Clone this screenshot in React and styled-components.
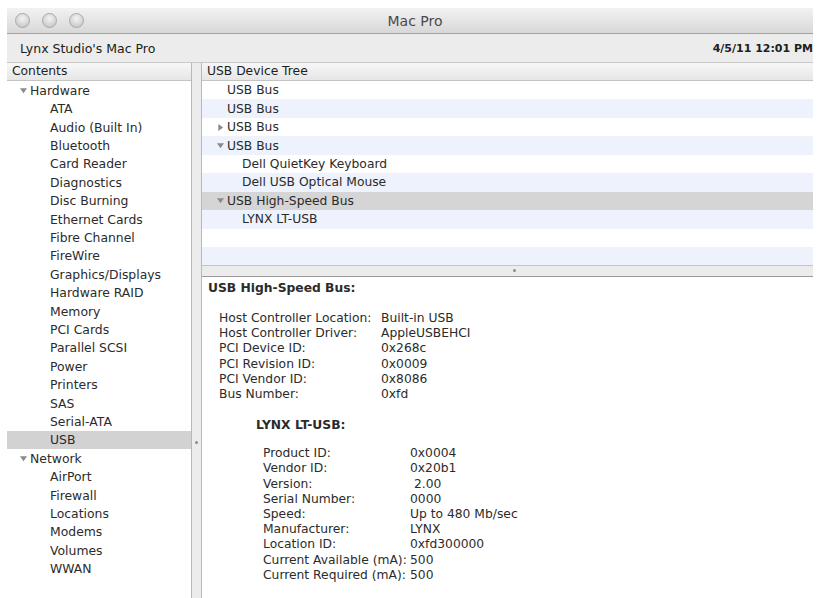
import React from 'react';
import styled, { createGlobalStyle } from 'styled-components';

const GlobalStyle = createGlobalStyle`
  html, body {
    margin: 0;
    padding: 0;
    background: #ffffff;
  }
  body {
    font-family: "DejaVu Sans", "Liberation Sans", sans-serif;
    color: #2a2a2a;
  }
`;

const sidebar = [
  { label: 'Hardware', level: 0, open: true },
  { label: 'ATA', level: 1 },
  { label: 'Audio (Built In)', level: 1 },
  { label: 'Bluetooth', level: 1 },
  { label: 'Card Reader', level: 1 },
  { label: 'Diagnostics', level: 1 },
  { label: 'Disc Burning', level: 1 },
  { label: 'Ethernet Cards', level: 1 },
  { label: 'Fibre Channel', level: 1 },
  { label: 'FireWire', level: 1 },
  { label: 'Graphics/Displays', level: 1 },
  { label: 'Hardware RAID', level: 1 },
  { label: 'Memory', level: 1 },
  { label: 'PCI Cards', level: 1 },
  { label: 'Parallel SCSI', level: 1 },
  { label: 'Power', level: 1 },
  { label: 'Printers', level: 1 },
  { label: 'SAS', level: 1 },
  { label: 'Serial-ATA', level: 1 },
  { label: 'USB', level: 1, selected: true },
  { label: 'Network', level: 0, open: true },
  { label: 'AirPort', level: 1 },
  { label: 'Firewall', level: 1 },
  { label: 'Locations', level: 1 },
  { label: 'Modems', level: 1 },
  { label: 'Volumes', level: 1 },
  { label: 'WWAN', level: 1 },
];

const tree = [
  { label: 'USB Bus', level: 0 },
  { label: 'USB Bus', level: 0 },
  { label: 'USB Bus', level: 0, toggle: 'closed' },
  { label: 'USB Bus', level: 0, toggle: 'open' },
  { label: 'Dell QuietKey Keyboard', level: 1 },
  { label: 'Dell USB Optical Mouse', level: 1 },
  { label: 'USB High-Speed Bus', level: 0, toggle: 'open', selected: true },
  { label: 'LYNX LT-USB', level: 1 },
  { label: '', level: 0 },
  { label: '', level: 0 },
];

const busInfo = [
  ['Host Controller Location:', 'Built-in USB'],
  ['Host Controller Driver:', 'AppleUSBEHCI'],
  ['PCI Device ID:', '0x268c'],
  ['PCI Revision ID:', '0x0009'],
  ['PCI Vendor ID:', '0x8086'],
  ['Bus Number:', '0xfd'],
];

const deviceInfo = [
  ['Product ID:', '0x0004'],
  ['Vendor ID:', '0x20b1'],
  ['Version:', ' 2.00'],
  ['Serial Number:', '0000'],
  ['Speed:', 'Up to 480 Mb/sec'],
  ['Manufacturer:', 'LYNX'],
  ['Location ID:', '0xfd300000'],
  ['Current Available (mA):', '500'],
  ['Current Required (mA):', '500'],
];

const Disclosure = ({ open }) => (
  <Arrow viewBox="0 0 8 8">
    {open ? <path d="M0 1.5 L8 1.5 L4 7 Z" /> : <path d="M1.5 0 L7 4 L1.5 8 Z" />}
  </Arrow>
);

const App = () => {
  return (
    <>
      <GlobalStyle />
      <Window>
        <TitleBar>
          <Lights>
            <Light />
            <Light />
            <Light />
          </Lights>
          <Title>Mac Pro</Title>
        </TitleBar>
        <InfoBar>
          <span>Lynx Studio's Mac Pro</span>
          <span>4/5/11 12:01 PM</span>
        </InfoBar>
        <Body>
          <Sidebar>
            <ColumnHeader>Contents</ColumnHeader>
            {sidebar.map((item, i) => (
              <SideRow key={i} $level={item.level} $selected={item.selected}>
                {item.open && <Disclosure open />}
                {item.label}
              </SideRow>
            ))}
          </Sidebar>
          <VSplitter>
            <Dimple />
          </VSplitter>
          <Main>
            <TreePane>
              <ColumnHeader>USB Device Tree</ColumnHeader>
              {tree.map((row, i) => (
                <TreeRow key={i} $odd={i % 2 === 1} $level={row.level} $selected={row.selected}>
                  {row.toggle && <Disclosure open={row.toggle === 'open'} />}
                  {row.label}
                </TreeRow>
              ))}
            </TreePane>
            <HSplitter>
              <Dimple />
            </HSplitter>
            <Detail>
              <SectionTitle>USB High-Speed Bus:</SectionTitle>
              <InfoTable $indent={11} $keyWidth={162}>
                {busInfo.map(([k, v]) => (
                  <React.Fragment key={k}>
                    <span>{k}</span>
                    <span>{v}</span>
                  </React.Fragment>
                ))}
              </InfoTable>
              <DeviceTitle>LYNX LT-USB:</DeviceTitle>
              <InfoTable $indent={55} $keyWidth={147}>
                {deviceInfo.map(([k, v]) => (
                  <React.Fragment key={k}>
                    <span>{k}</span>
                    <span>{v}</span>
                  </React.Fragment>
                ))}
              </InfoTable>
            </Detail>
          </Main>
        </Body>
      </Window>
    </>
  );
};

const Window = styled.div`
  margin: 8px 5px 0 7px;
  height: 590px;
  background: #e9e9e9;
  display: flex;
  flex-direction: column;
  overflow: hidden;
`;

const TitleBar = styled.div`
  height: 25px;
  position: relative;
  display: flex;
  align-items: center;
  justify-content: center;
  padding-left: 10px;
  background: linear-gradient(#f2f2f2, #d8d8d8);
  border-bottom: 1px solid #a2a2a2;
`;

const Lights = styled.div`
  position: absolute;
  left: 8px;
  top: 5px;
  display: flex;
  gap: 12px;
`;

const Light = styled.div`
  width: 13px;
  height: 13px;
  border-radius: 50%;
  background: radial-gradient(circle at 50% 35%, #f4f4f4, #cfcfcf 70%, #bdbdbd);
  border: 1px solid #a9a9a9;
`;

const Title = styled.div`
  font-size: 14px;
  color: #4a4a4a;
`;

const InfoBar = styled.div`
  height: 28px;
  display: flex;
  align-items: center;
  justify-content: space-between;
  padding: 0 0 0 13px;
  font-size: 12.5px;
  color: #202020;
  background: #ececec;
  border-bottom: 1px solid #c8c8c8;
  & > span:last-child {
    font-weight: bold;
    font-size: 11px;
  }
`;

const Body = styled.div`
  flex: 1;
  display: flex;
  min-height: 0;
`;

const Sidebar = styled.div`
  width: 184px;
  background: #ffffff;
  border-right: 1px solid #b8b8b8;
  font-size: 12.4px;
`;

const ColumnHeader = styled.div`
  height: 17px;
  line-height: 17px;
  padding-left: 5px;
  font-size: 12.3px;
  color: #1e1e1e;
  background: linear-gradient(#f7f7f7, #e6e6e6);
  border-bottom: 1px solid #c4c4c4;
`;

const SideRow = styled.div`
  height: 18.42px;
  display: flex;
  align-items: center;
  padding-left: ${(p) => (p.$level === 0 ? 13 : 43)}px;
  color: #2b2b2b;
  background: ${(p) => (p.$selected ? '#d2d2d2' : 'transparent')};
  white-space: nowrap;
  & > svg {
    margin-right: 3px;
  }
`;

const Arrow = styled.svg`
  width: 7px;
  height: 7px;
  fill: #8a8a8a;
  flex-shrink: 0;
`;

const VSplitter = styled.div`
  width: 9px;
  background: #ececec;
  border-right: 1px solid #b8b8b8;
  position: relative;
  & > div {
    top: 378px;
    left: 3px;
  }
`;

const HSplitter = styled.div`
  height: 10px;
  background: #ececec;
  border-top: 1px solid #c4c4c4;
  border-bottom: 1px solid #9a9a9a;
  position: relative;
  & > div {
    top: 3px;
    left: 311px;
  }
`;

const Dimple = styled.div`
  position: absolute;
  width: 3px;
  height: 3px;
  border-radius: 50%;
  background: #8c8c8c;
`;

const Main = styled.div`
  flex: 1;
  display: flex;
  flex-direction: column;
  background: #ffffff;
  min-width: 0;
`;

const TreePane = styled.div`
  height: 202px;
  font-size: 12.3px;
  overflow: hidden;
`;

const TreeRow = styled.div`
  height: 18.45px;
  display: flex;
  align-items: center;
  padding-left: ${(p) => (p.$level === 0 ? 25 : 40)}px;
  color: #2b2b2b;
  white-space: nowrap;
  background: ${(p) => (p.$selected ? '#d5d5d5' : p.$odd ? '#edf2fc' : '#ffffff')};
  & > svg {
    margin-left: -10px;
    margin-right: 3px;
  }
`;

const Detail = styled.div`
  flex: 1;
  padding: 3px 0 0 6px;
  font-size: 12.3px;
  color: #2b2b2b;
`;

const SectionTitle = styled.div`
  font-weight: bold;
  height: 16px;
  line-height: 16px;
  margin-bottom: 15px;
`;

const DeviceTitle = styled.div`
  font-weight: bold;
  line-height: 16px;
  margin: 15px 0 13px 48px;
`;

const InfoTable = styled.div`
  display: grid;
  grid-template-columns: ${(p) => p.$keyWidth}px auto;
  line-height: 15.2px;
  padding-left: ${(p) => p.$indent}px;
  white-space: pre;
`;

export default App;
